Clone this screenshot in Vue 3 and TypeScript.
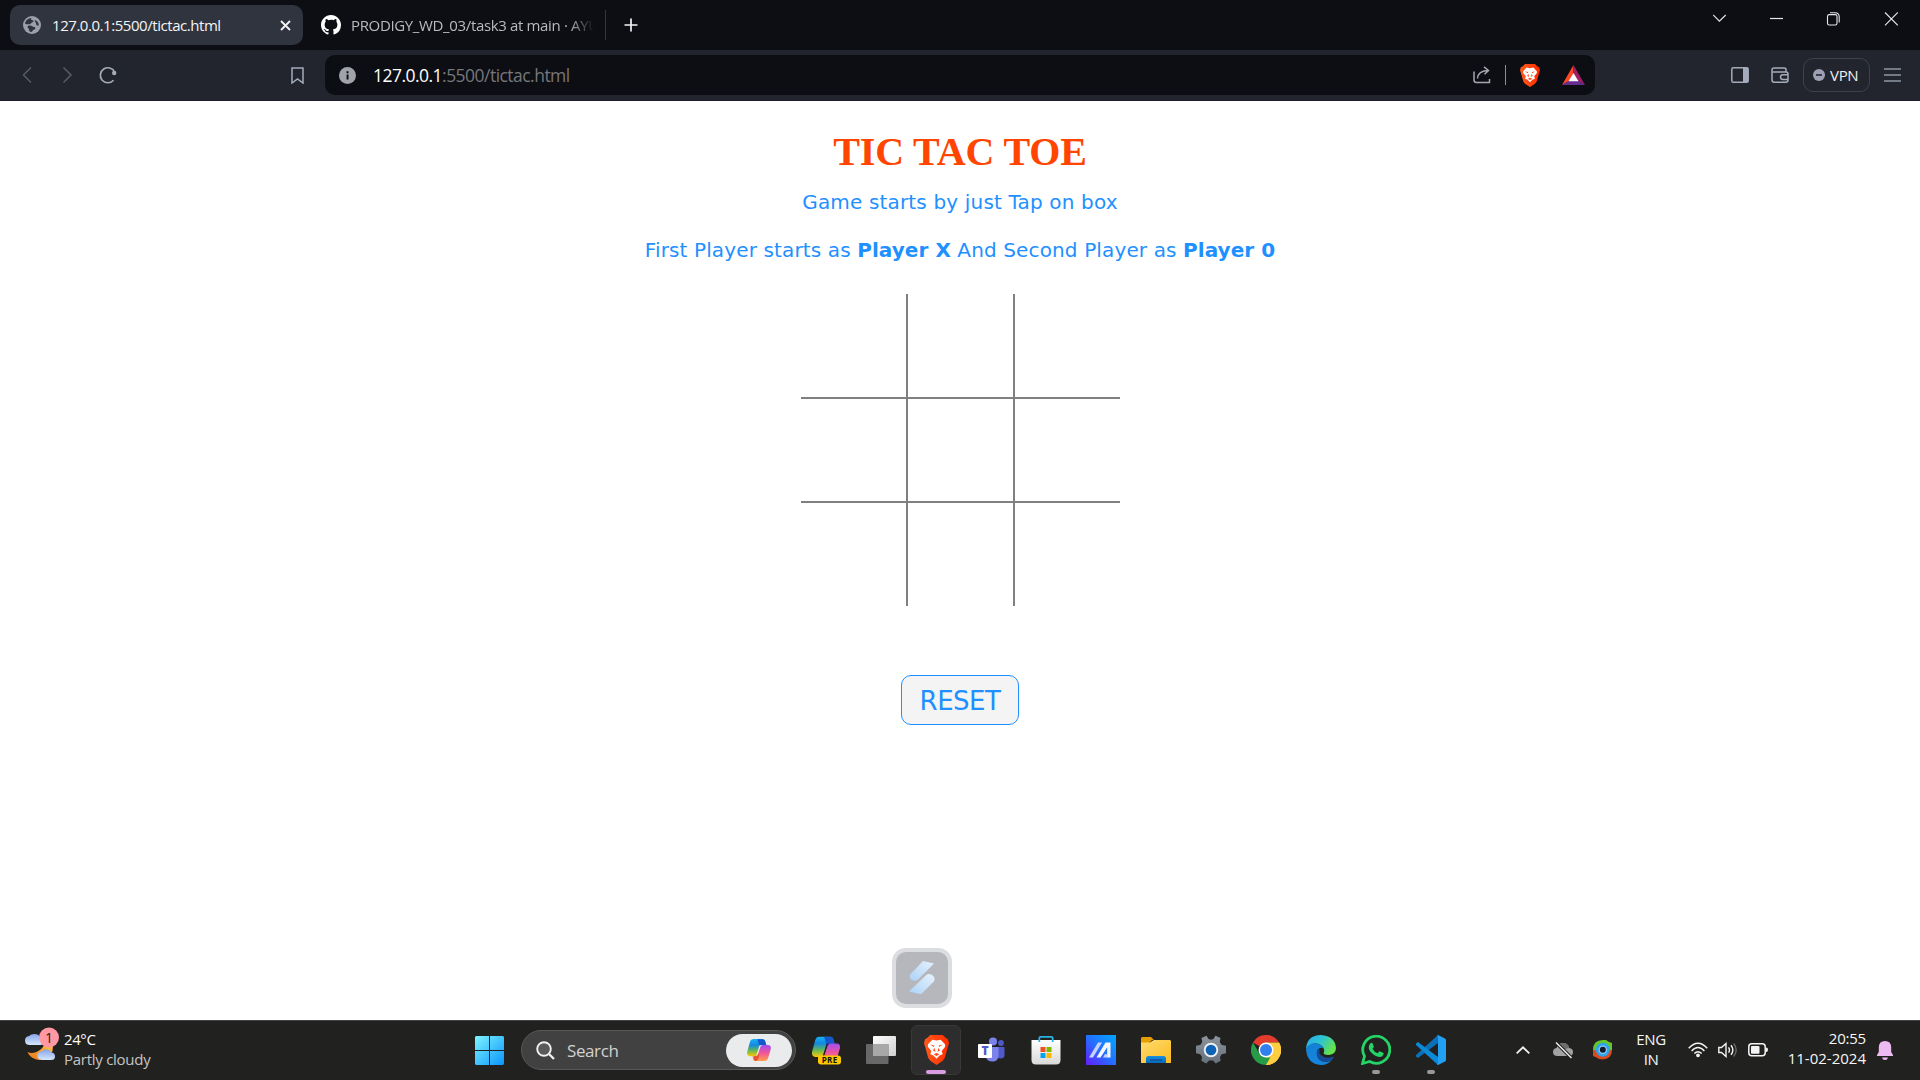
<script setup lang="ts">
import { ref } from 'vue'

type Mark = '' | 'X' | '0'

const cells = ref<Mark[]>(Array(9).fill(''))
const turn = ref<Mark>('X')

function play(i: number) {
  if (cells.value[i]) return
  cells.value[i] = turn.value
  turn.value = turn.value === 'X' ? '0' : 'X'
}

function reset() {
  cells.value = Array(9).fill('')
  turn.value = 'X'
}
</script>

<template>
  <div class="screen">
    <svg class="defs" width="0" height="0" aria-hidden="true">
      <defs>
        <linearGradient id="win" x1="0" y1="0" x2="1" y2="1"><stop offset="0" stop-color="#7df3ff" /><stop offset="1" stop-color="#0a95fb" /></linearGradient>
        <linearGradient id="brave" x1="0" y1="0" x2="1" y2="0"><stop offset="0" stop-color="#ff5a1c" /><stop offset="1" stop-color="#ff2b00" /></linearGradient>
        <linearGradient id="cpLeft" x1="0" y1="0" x2="0" y2="1"><stop offset="0" stop-color="#18b2f5" /><stop offset=".35" stop-color="#1488e0" /><stop offset=".65" stop-color="#5fb65a" /><stop offset="1" stop-color="#ffc800" /></linearGradient>
        <linearGradient id="cpRight" x1="0" y1="0" x2="0" y2="1"><stop offset="0" stop-color="#a24df0" /><stop offset=".5" stop-color="#f0559a" /><stop offset="1" stop-color="#ffa04a" /></linearGradient>
        <linearGradient id="asus" x1="1" y1="0" x2="0" y2="1"><stop offset="0" stop-color="#00a8ff" /><stop offset=".5" stop-color="#2370ff" /><stop offset="1" stop-color="#651cff" /></linearGradient>
        <linearGradient id="folder" x1="0" y1="0" x2="1" y2="1"><stop offset="0" stop-color="#ffdc70" /><stop offset="1" stop-color="#fcbb20" /></linearGradient>
        <linearGradient id="dock" x1="0" y1="0" x2="0" y2="1"><stop offset="0" stop-color="#1a8fe0" /><stop offset="1" stop-color="#0868ba" /></linearGradient>
        <linearGradient id="edgeTop" x1="0" y1="0" x2="1" y2=".5"><stop offset="0" stop-color="#2cacf0" /><stop offset=".5" stop-color="#2cc3d2" /><stop offset="1" stop-color="#66e24c" /></linearGradient>
        <linearGradient id="edgeLow" x1="0" y1="0" x2="0" y2="1"><stop offset="0" stop-color="#1580d5" /><stop offset="1" stop-color="#1486dc" /></linearGradient>
        <linearGradient id="moon" x1="0" y1="1" x2="1" y2="0"><stop offset="0" stop-color="#e8751a" /><stop offset="1" stop-color="#ffc84a" /></linearGradient>
        <linearGradient id="cloud" x1="0" y1="0" x2="0" y2="1"><stop offset="0" stop-color="#86a5ea" /><stop offset="1" stop-color="#d6e6fd" /></linearGradient>
        <linearGradient id="bag" x1="0" y1="0" x2="0" y2="1"><stop offset="0" stop-color="#ffffff" /><stop offset="1" stop-color="#d8d8d8" /></linearGradient>
        <linearGradient id="pane" x1="0" y1="0" x2="1" y2="1"><stop offset="0" stop-color="#ffffff" /><stop offset="1" stop-color="#cfcfcf" /></linearGradient>
        <linearGradient id="ribbon" x1="1" y1="0" x2="0" y2="1"><stop offset="0" stop-color="#e6f2fc" /><stop offset="1" stop-color="#acd2f7" /></linearGradient>
        <linearGradient id="gear" x1="0" y1="0" x2="0" y2="1"><stop offset="0" stop-color="#8c949d" /><stop offset="1" stop-color="#66707a" /></linearGradient>
        <symbol id="lion" viewBox="0 0 24 29" preserveAspectRatio="none">
          <path d="M6 0h12l3 3 2 1 1 4-1 3-3 11-2 3-6 4-6-4-2-3L1 11 0 8l1-4 2-1z" fill="url(#brave)" />
          <path d="M12 5.400 8 4.500 3.800 9l-.1 2.400 3.300 4-.9 3.200 3 1.300L12 23l2.900-3.100 3-1.300-.9-3.200 3.300-4-.1-2.400L16 4.500z" fill="#fff" />
          <path d="m6 9.300 3.800.8-.4 1.500zm12 0-3.800.8.4 1.500zM9.900 12.400l-1.200 2.800 2.400 1.100zm4.200 0 1.200 2.800-2.400 1.100zM9.200 18.500l2.800-1.100 2.800 1.100L12 20.200z" fill="#ff491c" />
        </symbol>
        <symbol id="copilot" viewBox="0 0 24 22">
          <path d="M6.800 0h8.500c1.700 0 2.500 1 3 2.800l1 3.200h-3.400c-2 0-2.800.8-3.400 2.700l-1.800 5.800c-.5 1.800-1.500 2.800-3.400 2.800H3.100C.7 17.300-.2 15.600.2 13L2.800 3.400C3.500 1 4.700 0 6.800 0z" fill="url(#cpLeft)" />
          <path d="M10.400.2h5c1.700 0 2.400 1 2.900 2.600l1 3.200h-3.400c-1.800 0-2.500.7-3.100 2.200z" fill="#1557cf" />
          <path d="M17.200 22H9c-1.700 0-2.500-1-3-2.700l-.6-2h1.900c2 0 3-.9 3.500-2.700l1.900-6c.6-1.800 1.500-2.600 3.400-2.600h4.800c2.400 0 3.400 1.600 2.900 4l-2.600 8.800c-.7 2.200-1.900 3.200-4 3.200z" fill="url(#cpRight)" />
          <path d="m7 17.300-.5 3.500q1 1.200 2.500 1.200 1.800-.3 2.500-3l1-3.500-1.700-1q-.8 2.800-3.800 2.800z" fill="#e5542f" />
          <path class="slit" d="M15 6.200q-1.500.6-2 2.500l-1.900 6q-.6 2-2.100 2.500l3.500-11z" />
        </symbol>
      </defs>
    </svg>

    <header class="tabs">
      <div class="tab active">
        <svg width="18" height="18" viewBox="0 0 18 18"><circle cx="9" cy="9" r="9" fill="#9aa0a9" /><path d="M8.600 2.100c-1 .9-.7 2 .7 2.200 1.800.2 1.700 1.300.2 2-1.600.6-1.500 1.900-3.200 1.900-2 0-2.600.4-4.200-.4C2.400 4.800 5 2.200 8.600 2.100zM5.900 9.600c3.400-.6 3.200 1.500 5.400 1.400 1.500 0 1.400 2.500-.5 2.700-1.800.2-.6 2-2.800 2.300-2.600-.7-1.500-3-2.800-3.800-1.100-.7-.9-2.300.7-2.600zM12 4c2.500 1 3.700 2.700 3.800 5.200-1 1-3-.2-2.800-1.700.1-1.400-2-2.300-1-3.500z" fill="#30343e" /></svg>
        <span class="tab-title first">127.0.0.1:5500/tictac.html</span>
        <svg class="close" width="11" height="11" viewBox="0 0 11 11"><path d="m1 1 9 9m0-9-9 9" stroke="#f1f1f3" stroke-width="1.900" /></svg>
      </div>
      <div class="tab idle">
        <svg width="20" height="20" viewBox="0 0 16 16"><path fill="#fff" d="M8 0C3.580 0 0 3.580 0 8c0 3.540 2.290 6.530 5.470 7.590.4.070.55-.17.55-.38 0-.19-.01-.82-.01-1.490-2.010.37-2.530-.49-2.690-.94-.09-.23-.48-.94-.82-1.130-.28-.15-.68-.52-.01-.53.63-.01 1.080.58 1.230.82.72 1.210 1.870.87 2.330.66.07-.52.28-.87.51-1.070-1.780-.2-3.640-.89-3.640-3.950 0-.87.31-1.590.82-2.150-.08-.2-.36-1.020.08-2.120 0 0 .67-.21 2.200.82A7.600 7.600 0 0 1 8 3.860c.68 0 1.360.09 2 .27 1.530-1.040 2.200-.82 2.200-.82.44 1.100.16 1.920.08 2.120.51.56.82 1.270.82 2.150 0 3.070-1.870 3.750-3.650 3.950.29.25.54.73.54 1.480 0 1.070-.01 1.930-.01 2.200 0 .21.15.46.55.38A8.010 8.010 0 0 0 16 8c0-4.420-3.580-8-8-8z" /></svg>
        <span class="tab-title second">PRODIGY_WD_03/task3 at main · AYU</span>
      </div>
      <i class="tab-sep"></i>
      <svg class="plus" width="14" height="14" viewBox="0 0 14 14"><path d="M7 .5v13M.5 7h13" stroke="#f3f3f5" stroke-width="1.700" /></svg>
      <svg class="caption" width="185" height="14" viewBox="-1 0 185 14" fill="none" stroke="#e8e8ea" stroke-width="1.100">
        <path d="m-.8 3 6.200 6.200L11.700 3" /><path d="M56 6.500h13" stroke-width="1.200" />
        <path d="M116 .8h5q4.200 0 4.200 4.200v5.500" /><rect x="113.500" y="2.600" width="9.500" height="10.400" rx="1.800" />
        <path d="m171 .5 12.800 12.800m0-12.800L171 13.300" />
      </svg>
    </header>

    <div class="toolbar">
      <svg class="nav" width="96" height="18" viewBox="0 0 96 18" fill="none" stroke="#565b65" stroke-width="1.500">
        <path d="M9 1.500 1.500 9 9 16.500M41.500 1.500 49 9l-7.500 7.500" />
        <path d="M91.500 14.200A7.500 7.500 0 1 1 92.600 6" stroke="#a4abba" stroke-width="1.700" />
        <circle cx="92.200" cy="7" r="2.200" fill="#a4abba" stroke="none" />
      </svg>
      <svg class="bookmark" width="13" height="17" viewBox="0 0 13 17"><path d="M1 1h11v15l-5.500-4L1 16z" fill="none" stroke="#a4abba" stroke-width="1.500" /></svg>
      <div class="urlbar">
        <svg class="info" width="17" height="17" viewBox="0 0 17 17"><circle cx="8.500" cy="8.500" r="8.500" fill="#a0a4aa" /><path d="M7.600 7.400h1.900v5H7.600zM7.500 4.200h2v2h-2z" fill="#0d0e13" /></svg>
        <span class="url"><b>127.0.0.1</b>:5500/tictac.html</span>
        <svg class="share" width="18" height="18" viewBox="0 0 18 18" fill="none" stroke="#a4a8ae" stroke-width="1.500"><path d="M1 5.500V14q0 2.500 2.500 2.500h13V13M4.500 12.500Q5 5 14.500 4.500M11 .9l4.500 3.600L11.500 8.300" /></svg>
        <i class="url-sep"></i>
        <svg class="shield" width="20" height="23"><use href="#lion" width="20" height="23" /></svg>
        <svg class="bat" width="23" height="20" viewBox="0 0 23 20"><path d="M11.500 0 0 20l11.500-6.700z" fill="#ff4724" /><path d="M11.500 0 23 20l-11.500-6.700z" fill="#9e1f63" /><path d="M0 20h23l-11.500-7z" fill="#662d91" /><path d="m11.500 8 5 8.200h-10z" fill="#fff" /></svg>
      </div>
      <svg class="side" width="58" height="18" viewBox="0 0 58 18" fill="none" stroke="#a4abba" stroke-width="1.500">
        <rect x=".8" y="1.800" width="16.400" height="14.400" rx="1.500" /><path d="M12 2h5v14h-5z" fill="#a4abba" stroke="none" />
        <path d="M55 6V3.500Q55 2 53 2H43q-2 0-2 2v10q0 2.200 2.200 2.200h11.600q2.200 0 2.200-2.200V8q0-2-2-2H41.500M57 8.700h-5q-2.500 0-2.500 2.400t2.500 2.300h5" />
      </svg>
      <div class="vpn"><svg width="12" height="12" viewBox="0 0 12 12"><circle cx="6" cy="6" r="6" fill="#9d9fb5" /><path d="M3 6h6" stroke="#22252d" stroke-width="1.600" /></svg><span>VPN</span></div>
      <svg class="menu" width="17" height="14" viewBox="0 0 17 14"><path d="M0 1h17M0 7h17M0 13h17" stroke="#8f96a3" stroke-width="1.500" /></svg>
    </div>

    <main class="page">
      <h1>TIC TAC TOE</h1>
      <p class="line one">Game starts by just Tap on box</p>
      <p class="line two">First Player starts as <b>Player X</b> And Second Player as <b>Player 0</b></p>
      <div class="board">
        <div v-for="(c, i) in cells" :key="i" class="cell" @click="play(i)">{{ c }}</div>
      </div>
      <button class="reset" @click="reset">RESET</button>
      <div class="gadget">
        <svg width="26" height="34" viewBox="0 0 26 34"><path d="M14 0 25 2.500 9.500 18q-2.500 2.500-6 1.200Q-1 17.300 1.700 13z" fill="url(#ribbon)" /><path d="M0 30.500 17 14.200q2-2 5.200-.8 4.800 2.400 2.700 7L12 33.300z" fill="url(#ribbon)" /></svg>
      </div>
    </main>

    <footer class="taskbar">
      <div class="weather">
        <svg width="35" height="36" viewBox="0 0 35 36">
          <path d="M27 16q3 9-4 14-6 4.500-13 2-6-2.500-7.500-7 4 2 9 0 7-3 8-9z" fill="url(#moon)" />
          <path d="M5 18q-5 0-5-4.500 0-4 4-4.500Q6 7 9.500 7q4 0 5.500 3 4 1 4 4.500T15 18z" fill="url(#cloud)" />
          <path d="M17 33q-4.500-.5-4.500-4 0-4 4-4.200Q18 22 21.500 22.500q3.500 0 4.500 3 4 .2 4 4 0 3.500-4 3.500z" fill="url(#cloud)" />
          <circle cx="24" cy="10.500" r="10" fill="#ff98a2" />
          <text x="24" y="15.500" text-anchor="middle" font-size="14" fill="#222">1</text>
        </svg>
        <div class="weather-text"><span class="temp">24°C</span><span class="sky">Partly cloudy</span></div>
      </div>

      <svg class="start" width="29" height="29" viewBox="0 0 29 29"><path d="M1 0h13v14H0V1zM15 0h13l1 1v13H15zM0 15h14v14H1l-1-1zM15 15h14v13l-1 1H15z" fill="url(#win)" /></svg>
      <div class="search">
        <svg class="glass" width="19" height="19" viewBox="0 0 19 19"><circle cx="8" cy="8" r="6.800" fill="#5a5a5a" stroke="#f0f0f0" stroke-width="1.900" /><path d="m13 13 5 5" stroke="#f0f0f0" stroke-width="2.300" /></svg>
        <span>Search</span>
        <div class="assist"><svg class="on-light" width="24" height="22"><use href="#copilot" width="24" height="22" /></svg></div>
      </div>

      <div class="apps">
        <div class="app"><svg class="on-dark" width="30" height="30" viewBox="0 0 30 30"><svg x="0" y="1.500" width="30" height="26" viewBox="0 0 24 22"><use href="#copilot" width="24" height="22" /></svg><rect x="7" y="20.500" width="23" height="9" rx="3" fill="#ffc800" /><text x="18.700" y="28" text-anchor="middle" class="pre">PRE</text></svg></div>
        <div class="app"><svg width="30" height="30" viewBox="0 0 30 30"><rect x="7" y="1" width="23" height="20" rx="1" fill="url(#pane)" /><rect x="0" y="9" width="22.500" height="20" rx="1" fill="#686868" /><path d="M7 9h15.500v12H7z" fill="#a8a8a8" /></svg></div>
        <div class="app current"><svg width="25" height="30"><use href="#lion" width="25" height="30" /></svg><i class="run wide"></i></div>
        <div class="app"><svg width="30" height="30" viewBox="0 0 30 30"><circle cx="17" cy="6.500" r="4" fill="#7b83eb" /><circle cx="25" cy="8" r="2.900" fill="#5059c9" /><path d="M20 12h8.500v8q0 3.500-4 3.500T20 20z" fill="#5059c9" /><path d="M9 12h13.500v9q-.5 5.500-6 5.500T10 22z" fill="#7b83eb" /><rect x="2" y="9" width="14" height="14" rx="1" fill="#fff" /><text x="9" y="20.300" text-anchor="middle" class="teams">T</text></svg></div>
        <div class="app"><svg width="30" height="30" viewBox="0 0 30 30"><path d="M.5 5h29v20q0 4.500-4.500 4.500H5Q.5 29.500.5 25z" fill="url(#bag)" /><path d="M8.300 7V3.200q0-1.400 1.400-1.400h10.600q1.400 0 1.400 1.400V7" fill="none" stroke="#2bb1e5" stroke-width="1.800" /><path d="M9.500 12h5v5h-5z" fill="#f25022" /><path d="M15.500 12h5v5h-5z" fill="#7fba00" /><path d="M9.500 18h5v5h-5z" fill="#00a4ef" /><path d="M15.500 18h5v5h-5z" fill="#ffb900" /></svg></div>
        <div class="app"><svg width="30" height="30" viewBox="0 0 30 30"><path d="M0 0h30v30H0z" fill="url(#asus)" /><path d="M3 22.500 12 7.500h4L7 22.500z" fill="#c3d2ff" /><path d="M10.500 22.500 19.500 7.500h5v15h-3.300V12.300L14.500 22.500z" fill="#f4f7ff" /><path d="M17 22.500h5l-1.500-3.500h-1.500z" fill="#c3d2ff" /></svg></div>
        <div class="app"><svg width="30" height="30" viewBox="0 0 30 30"><path d="M0 3.500Q0 2 1.500 2H10l3 3h-2l-3 3H0z" fill="#e5a000" /><path d="M0 7.500h8q1.500 0 2.500-1t2.500-1.500h16l1 1v22H0z" fill="url(#folder)" /><path d="M5 28v-4.500Q5 21 7.500 21h15q2.500 0 2.500 2.500V28z" fill="url(#dock)" /><path d="M9 25h12" stroke="#0a4c93" stroke-width="1.300" /></svg></div>
        <div class="app"><svg width="30" height="30" viewBox="0 0 30 30"><path d="m12.500 4 2.500.8 2.500-.8L19.500.8l5 2.200-.8 4 2 3 4.300.8v7.400l-4.300 1-1.800 3 .8 3.600-5 2.700-2.700-3h-4l-2.700 3-5-2.700.8-3.600-1.800-3-4.300-1v-7.400l4.300-.8 2-3-.8-4 5-2.200z" fill="url(#gear)" /><circle cx="15" cy="15" r="6.300" fill="#0d63b5" stroke="#edf0f3" stroke-width="1.900" /></svg></div>
        <div class="app"><svg width="30" height="30" viewBox="0 0 48 48"><path d="M24 24 3.200 12A24 24 0 0 1 44.800 12H24z" fill="#e33b2e" /><path d="M24 24 44.800 12A24 24 0 0 1 24 48z" fill="#ffcd40" /><path d="M24 48A24 24 0 0 1 3.200 12L13.600 30 24 36h10.400z" fill="#269b48" /><path d="M24 12h20.800A24 24 0 0 1 24 48l10.400-18z" fill="#ffcd40" /><circle cx="24" cy="24" r="12" fill="#fff" /><circle cx="24" cy="24" r="9.600" fill="#327ff0" /></svg></div>
        <div class="app"><svg width="30" height="30" viewBox="0 0 30 30"><path d="M0 14Q1 0 15 0q14 1 15 13-.2 7-8 7-4-.2-4.500-2 1.500-2 0-5-3-5-9-4.500Q3 9 0 14z" fill="url(#edgeTop)" /><path d="M0 14Q3 8 9 8.200q6 .2 8.500 4.800-4-1-6 2-1 8 5 11 5 2.500 10-2Q22 30 15 30 1 29 0 14z" fill="url(#edgeLow)" /><path d="M11.500 14.500Q9 21 13.500 25t12.500 0l2-3q-1-1-2 0-6 2-10-1-4-3-2-6.500z" fill="#144a97" /></svg></div>
        <div class="app"><svg width="30" height="30" viewBox="0 0 30 30"><path d="m1.500 28.500 2-7.200a13.500 13.500 0 1 1 5.200 5.200z" fill="none" stroke="#25d366" stroke-width="2.800" /><path d="M10.300 7.700q1 0 1.300.8l1.200 2.800q.2.600-.3 1.200l-1 1.200q1.800 3.400 5.200 4.600l1.400-1.700q.4-.5 1-.2l3 1.400q.6.300.5 1-.5 3-3.800 3.300-3.600 0-7.800-3.800T8 11q.3-2.600 2.300-3.300z" fill="#25d366" /></svg><i class="run"></i></div>
        <div class="app"><svg width="30" height="30" viewBox="0 0 30 30"><path d="M22 0 0 20v1.500l2 1.500 20-15z" fill="#0b70b8" /><path d="M22 30 0 10V8.500L2 7l20 15z" fill="#0b8ad8" /><path d="m22 0 7 3.500q1 .5 1 1.500v20q0 1-1 1.500L22 30q-.7 0-1-.5 1 0 1-1.200V1.700Q22 .5 21 .5q.3-.5 1-.5z" fill="#23a0f2" /></svg><i class="run"></i></div>
      </div>

      <div class="tray">
        <svg class="up" width="14" height="8" viewBox="0 0 14 8"><path d="m.7 7.300 6.300-6 6.300 6" fill="none" stroke="#f4f4f4" stroke-width="1.800" /></svg>
        <svg class="cloud" width="20" height="17" viewBox="0 0 20 17"><path d="M4.500 14Q0 14 0 10q0-3.500 3.500-4 2-5 6.500-5 5 0 6.200 5Q20 6.500 20 10q0 4-4 4z" fill="#a2a2a2" /><path d="M10 1q5 0 6.200 5-3.500.3-5 2L6 2.500Q7.500 1 10 1z" fill="#6d6d6d" /><path d="M3 .5 18.500 16" stroke="#242424" stroke-width="3.500" /><path d="M3 .5 18.500 16" stroke="#f0f0f0" stroke-width="1.400" /></svg>
        <svg class="ball" width="20" height="20" viewBox="0 0 20 20"><path d="M0 10Q0 0 10 0h3q2 2 6 3v7z" fill="#66c52d" /><path d="M19 10q0 9-9.500 9.500-4 0-6-2L0 16v-6z" fill="#dc4a1c" /><circle cx="9.800" cy="9.800" r="7" fill="#2ea4ed" /><circle cx="9.800" cy="9.800" r="4.300" fill="#8fc9f0" /><circle cx="9.800" cy="9.800" r="3" fill="#111a2b" /></svg>
        <div class="lang"><span>ENG</span><span>IN</span></div>
        <svg class="wifi" width="20" height="16" viewBox="0 0 20 16" fill="none" stroke="#f4f4f4" stroke-width="1.400"><path d="M.7 6.200Q10-3.800 19.300 6.200M3.600 9Q10 2 16.400 9M6.300 11.500q3.700-3.700 7.400 0" /><circle cx="10" cy="13.300" r="1.200" fill="#f4f4f4" /></svg>
        <svg class="volume" width="20" height="16" viewBox="0 0 20 16" fill="none" stroke="#f4f4f4" stroke-width="1.400"><path d="M.8 5.500H3.500L8 1.500v13l-4.500-4H.8zM10.500 5.300q2 2.700 0 5.400M13 3.200q3.800 4.800 0 9.600" /><path d="M15.700 1.500q5 6.500 0 13" stroke="#666" /></svg>
        <svg class="battery" width="20" height="14" viewBox="0 0 20 14"><rect x=".8" y=".8" width="16.400" height="12" rx="3" fill="none" stroke="#f4f4f4" stroke-width="1.500" /><rect x="3" y="3" width="8.500" height="7.700" rx="1" fill="#f4f4f4" /><path d="M18 4.500q2 0 2 2.300T18 9z" fill="#f4f4f4" /></svg>
        <div class="clock"><span>20:55</span><span class="date">11-02-2024</span></div>
        <svg class="bell" width="16" height="19" viewBox="0 0 16 19"><path d="M8 0q6 0 6.200 6v5l1.800 3v1H0v-1l1.800-3V6Q2 0 8 0zM5 16.500h6q-.5 2.500-3 2.500t-3-2.500z" fill="#edb9f1" /></svg>
      </div>
    </footer>
  </div>
</template>

<style>
html,
body {
  margin: 0;
  background: #fff;
  overflow: hidden;
}
</style>

<style scoped>
.screen {
  width: 1920px;
  height: 1080px;
  display: flex;
  flex-direction: column;
  overflow: hidden;
  font-family: "Open Sans", "Noto Sans", sans-serif;
}
.defs { position: absolute; }
svg { display: block; flex: none; }
span { white-space: nowrap; }
.slit { fill: var(--slit); }
.on-light { --slit: #eaebed; }
.on-dark { --slit: #212120; }

.tabs {
  height: 50px;
  flex: none;
  display: flex;
  align-items: center;
  background: #0d0e13;
}
.tab {
  display: flex;
  align-items: center;
  height: 40px;
  box-sizing: border-box;
}
.tab.active {
  width: 293px;
  margin-left: 10px;
  padding: 0 12px 0 13px;
  border-radius: 10px;
  background: #30343e;
}
.tab.idle {
  width: 284px;
  margin-left: 18px;
}
.tab-title { font-size: 15px; line-height: 20px; padding-bottom: 1px; }
.first { margin-left: 11px; color: #f4f4f6; letter-spacing: -0.45px; }
.second {
  margin-left: 10px;
  color: #b9babf;
  letter-spacing: -0.35px;
  -webkit-mask-image: linear-gradient(90deg, #000 218px, transparent 243px);
  mask-image: linear-gradient(90deg, #000 218px, transparent 243px);
}
.close { margin-left: auto; }
.tab-sep { width: 1px; height: 30px; background: #34363c; }
.plus { margin-left: 18px; }
.caption { margin: 0 22px 12px auto; }

.toolbar {
  height: 51px;
  flex: none;
  box-sizing: border-box;
  display: flex;
  align-items: center;
  background: #22252d;
  border-bottom: 1px solid #1d2028;
}
.nav { margin-left: 22px; }
.bookmark { margin-left: 173px; }
.urlbar {
  width: 1270px;
  height: 40px;
  margin-left: 21px;
  display: flex;
  align-items: center;
  border-radius: 10px;
  background: #0d0e13;
}
.info { margin-left: 14px; }
.url { margin-left: 17px; padding-bottom: 1px; font-size: 17.5px; letter-spacing: -0.53px; color: #75777b; }
.url b { font-weight: 400; color: #fff; }
.share { margin-left: auto; }
.url-sep { width: 1px; height: 20px; margin-left: 14px; background: #8c8e92; }
.shield { margin-left: 14px; }
.bat { margin: 0 10px 0 22px; }
.side { margin-left: 136px; }
.vpn {
  width: 67px;
  height: 34px;
  margin-left: 14px;
  box-sizing: border-box;
  display: flex;
  align-items: center;
  padding-left: 9px;
  gap: 5px;
  border: 1px solid #3d424d;
  border-radius: 10px;
  color: #f0f0f2;
  font-size: 15px;
  letter-spacing: -0.3px;
}
.menu { margin-left: 14px; }

.page {
  flex: 1;
  min-height: 0;
  display: flex;
  flex-direction: column;
  align-items: center;
  background: #fff;
}
h1 {
  margin: 28px 0 0;
  font: bold 40px/46px "Liberation Serif", "Times New Roman", serif;
  letter-spacing: -0.12px;
  color: orangered;
}
.line {
  margin: 0;
  font: 20px/24px "DejaVu Sans", Verdana, sans-serif;
  letter-spacing: 0.16px;
  color: dodgerblue;
  white-space: nowrap;
}
.line b { letter-spacing: 0.05px; }
.one { margin-top: 15px; }
.two { margin-top: 24px; letter-spacing: 0.13px; }
.board {
  width: 319px;
  height: 312px;
  margin-top: 32px;
  display: grid;
  grid-template-columns: 105px 109px 105px;
  grid-template-rows: 103px 106px 103px;
}
.cell {
  box-sizing: border-box;
  display: flex;
  align-items: center;
  justify-content: center;
  font: 60px "DejaVu Sans", sans-serif;
  color: dodgerblue;
}
.cell:nth-child(3n + 2) { border-left: 2px solid gray; border-right: 2px solid gray; }
.cell:nth-child(n + 4):nth-child(-n + 6) { border-top: 2px solid gray; border-bottom: 2px solid gray; }
.reset {
  width: 118px;
  height: 50px;
  margin-top: 69px;
  padding: 2px 0 0;
  border: 1px solid dodgerblue;
  border-radius: 10px;
  background: #f4f4f4;
  font: 26px/30px "DejaVu Sans", Verdana, sans-serif;
  letter-spacing: -0.5px;
  color: dodgerblue;
}
.gadget {
  width: 60px;
  height: 60px;
  margin: 223px 76px 0 0;
  box-sizing: border-box;
  display: flex;
  align-items: center;
  justify-content: center;
  border: 4px solid #dcdde0;
  border-radius: 14px;
  background: #b6b7bd;
}

.taskbar {
  height: 60px;
  flex: none;
  box-sizing: border-box;
  display: flex;
  align-items: center;
  padding-bottom: 1px;
  border-top: 1px solid #3f4342;
  background: #212120;
}
.weather { width: 449px; display: flex; align-items: center; }
.weather > svg { margin: -10px 0 0 25px; }
.weather-text { display: flex; flex-direction: column; margin-left: 4px; padding-bottom: 3px; font-size: 15px; line-height: 20px; letter-spacing: -0.27px; }
.temp { color: #fff; letter-spacing: -0.4px; }
.sky { color: #c5c5c4; }
.start { margin-left: 26px; }
.search {
  width: 275px;
  height: 40px;
  margin-left: 17px;
  box-sizing: border-box;
  display: flex;
  align-items: center;
  padding: 0 3px 0 14px;
  border: 1px solid #585858;
  border-radius: 20px;
  background: #414141;
  font-size: 17px;
  color: #d2d2d2;
}
.search span { margin-left: 12px; letter-spacing: -0.4px; }
.assist {
  width: 66px;
  height: 33px;
  margin-left: auto;
  display: flex;
  align-items: center;
  justify-content: center;
  border-radius: 17px;
  background: #eaebed;
}
.apps { display: flex; gap: 5px; margin-left: 5px; }
.app {
  position: relative;
  width: 50px;
  height: 50px;
  display: flex;
  align-items: center;
  justify-content: center;
  box-sizing: border-box;
}
.current { border: 1px solid #393939; border-radius: 6px; background: #2d2d2d; }
.run {
  position: absolute;
  bottom: 1px;
  left: 50%;
  width: 8px;
  height: 4px;
  border-radius: 2px;
  background: #999;
  transform: translateX(-50%);
}
.run.wide { bottom: 0; width: 20px; background: #d99ce0; }
.pre { font: bold 8px "Open Sans", sans-serif; letter-spacing: 0.4px; fill: #111; }
.teams { font: 800 12px "Open Sans", sans-serif; fill: #5059c9; }
.tray { display: flex; align-items: center; margin-left: 60px; color: #f6f6f6; font-size: 15px; line-height: 20px; }
.cloud { margin-left: 23px; }
.ball { margin-left: 20px; }
.lang { width: 40px; margin-left: 18px; padding-bottom: 2px; display: flex; flex-direction: column; align-items: center; letter-spacing: -0.4px; }
.wifi { margin-left: 17px; }
.volume { margin-left: 10px; }
.battery { margin-left: 10px; }
.clock { width: 98px; padding-bottom: 4px; display: flex; flex-direction: column; align-items: flex-end; letter-spacing: -0.2px; }
.date { letter-spacing: 0; }
.bell { margin-left: 11px; }
</style>
